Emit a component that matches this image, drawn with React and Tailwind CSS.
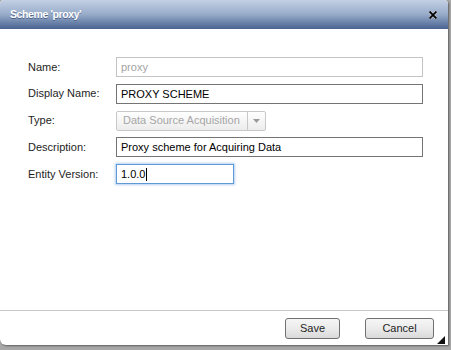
import React from "react";

const font = { fontFamily: '"Liberation Sans", Arial, sans-serif' };

function Row({ label, children }) {
  return (
    <div className="flex items-center h-[20px]">
      <div className="w-[88px] text-[11px] text-[#1e1e1e] leading-none">{label}</div>
      {children}
    </div>
  );
}

export default function App() {
  return (
    <div className="w-[451px] h-[350px] bg-[#a8a8a8] overflow-hidden" style={font}>
      <div className="relative w-[448px] h-[345px] bg-white rounded-t-[4px] rounded-bl-[6px] flex flex-col shadow-[1px_1px_2px_rgba(0,0,0,0.45)]">
        {/* header */}
        <div className="h-[29px] rounded-t-[4px] bg-gradient-to-b from-[#c3d0e4] via-[#97abc9] to-[#4a6391] flex items-center justify-between pl-[10px] pr-[11px]">
          <span className="text-white font-bold text-[10.5px] tracking-[-0.4px] [text-shadow:0_1px_0_rgba(40,60,100,0.6)]">Scheme 'proxy'</span>
          <svg width="8" height="8" viewBox="0 0 8 8">
            <path d="M1 1 L7 7 M7 1 L1 7" stroke="#fff" strokeWidth="3" strokeLinecap="square" opacity="0.5" />
            <path d="M1.2 1.2 L6.8 6.8 M6.8 1.2 L1.2 6.8" stroke="#000" strokeWidth="1.9" strokeLinecap="square" />
          </svg>
        </div>

        {/* body */}
        <div className="flex-1 pt-[28px] pl-[28px] flex flex-col gap-[6.75px]">
          <Row label="Name:">
            <div className="w-[307px] h-[20px] border border-[#c4c4c4] flex items-center px-[4px] text-[11px] text-[#a3a3a3]">proxy</div>
          </Row>
          <Row label="Display Name:">
            <div className="w-[307px] h-[20px] border border-[#747474] flex items-center px-[4px] text-[11px] text-black">PROXY SCHEME</div>
          </Row>
          <Row label="Type:">
            <div className="w-[150px] h-[20px] border border-[#c8c8c8] rounded-[2px] bg-gradient-to-b from-white to-[#ececec] flex items-center">
              <div className="flex-1 pl-[6px] text-[11px] text-[#a6a6a6] whitespace-nowrap">Data Source Acquisition</div>
              <div className="w-[18px] h-full border-l border-[#c8c8c8] flex items-center justify-center">
                <svg width="7" height="4" viewBox="0 0 7 4">
                  <path d="M0 0 L7 0 L3.5 4 Z" fill="#9b9b9b" />
                </svg>
              </div>
            </div>
          </Row>
          <Row label="Description:">
            <div className="w-[307px] h-[20px] border border-[#747474] flex items-center px-[4px] text-[11px] text-black">Proxy scheme for Acquiring Data</div>
          </Row>
          <Row label="Entity Version:">
            <div className="w-[118px] h-[20px] border border-[#5e9ad6] shadow-[0_0_2px_1px_rgba(120,170,225,0.55)] flex items-center px-[4px] text-[11px] text-black">
              <span>1.0.0</span>
              <span className="w-[1px] h-[13px] bg-black ml-[1px]" />
            </div>
          </Row>
        </div>

        {/* footer */}
        <div className="h-[35px] border-t border-[#c8c8c8] flex justify-end items-start pt-[7px] pr-[14px] gap-[25px]">
          <button className="w-[55px] h-[21px] border border-[#707070] rounded-[3px] bg-gradient-to-b from-[#f6f6f6] via-[#ebebeb] to-[#d9d9d9] text-[11px] text-[#1e1e1e] leading-none">Save</button>
          <button className="w-[69px] h-[21px] border border-[#707070] rounded-[3px] bg-gradient-to-b from-[#f6f6f6] via-[#ebebeb] to-[#d9d9d9] text-[11px] text-[#1e1e1e] leading-none">Cancel</button>
        </div>

        <svg className="absolute right-[3px] bottom-[1px]" width="8" height="8" viewBox="0 0 8 8">
          <path d="M8 0 L8 8 L0 8 Z" fill="#111" />
        </svg>
      </div>
    </div>
  );
}
